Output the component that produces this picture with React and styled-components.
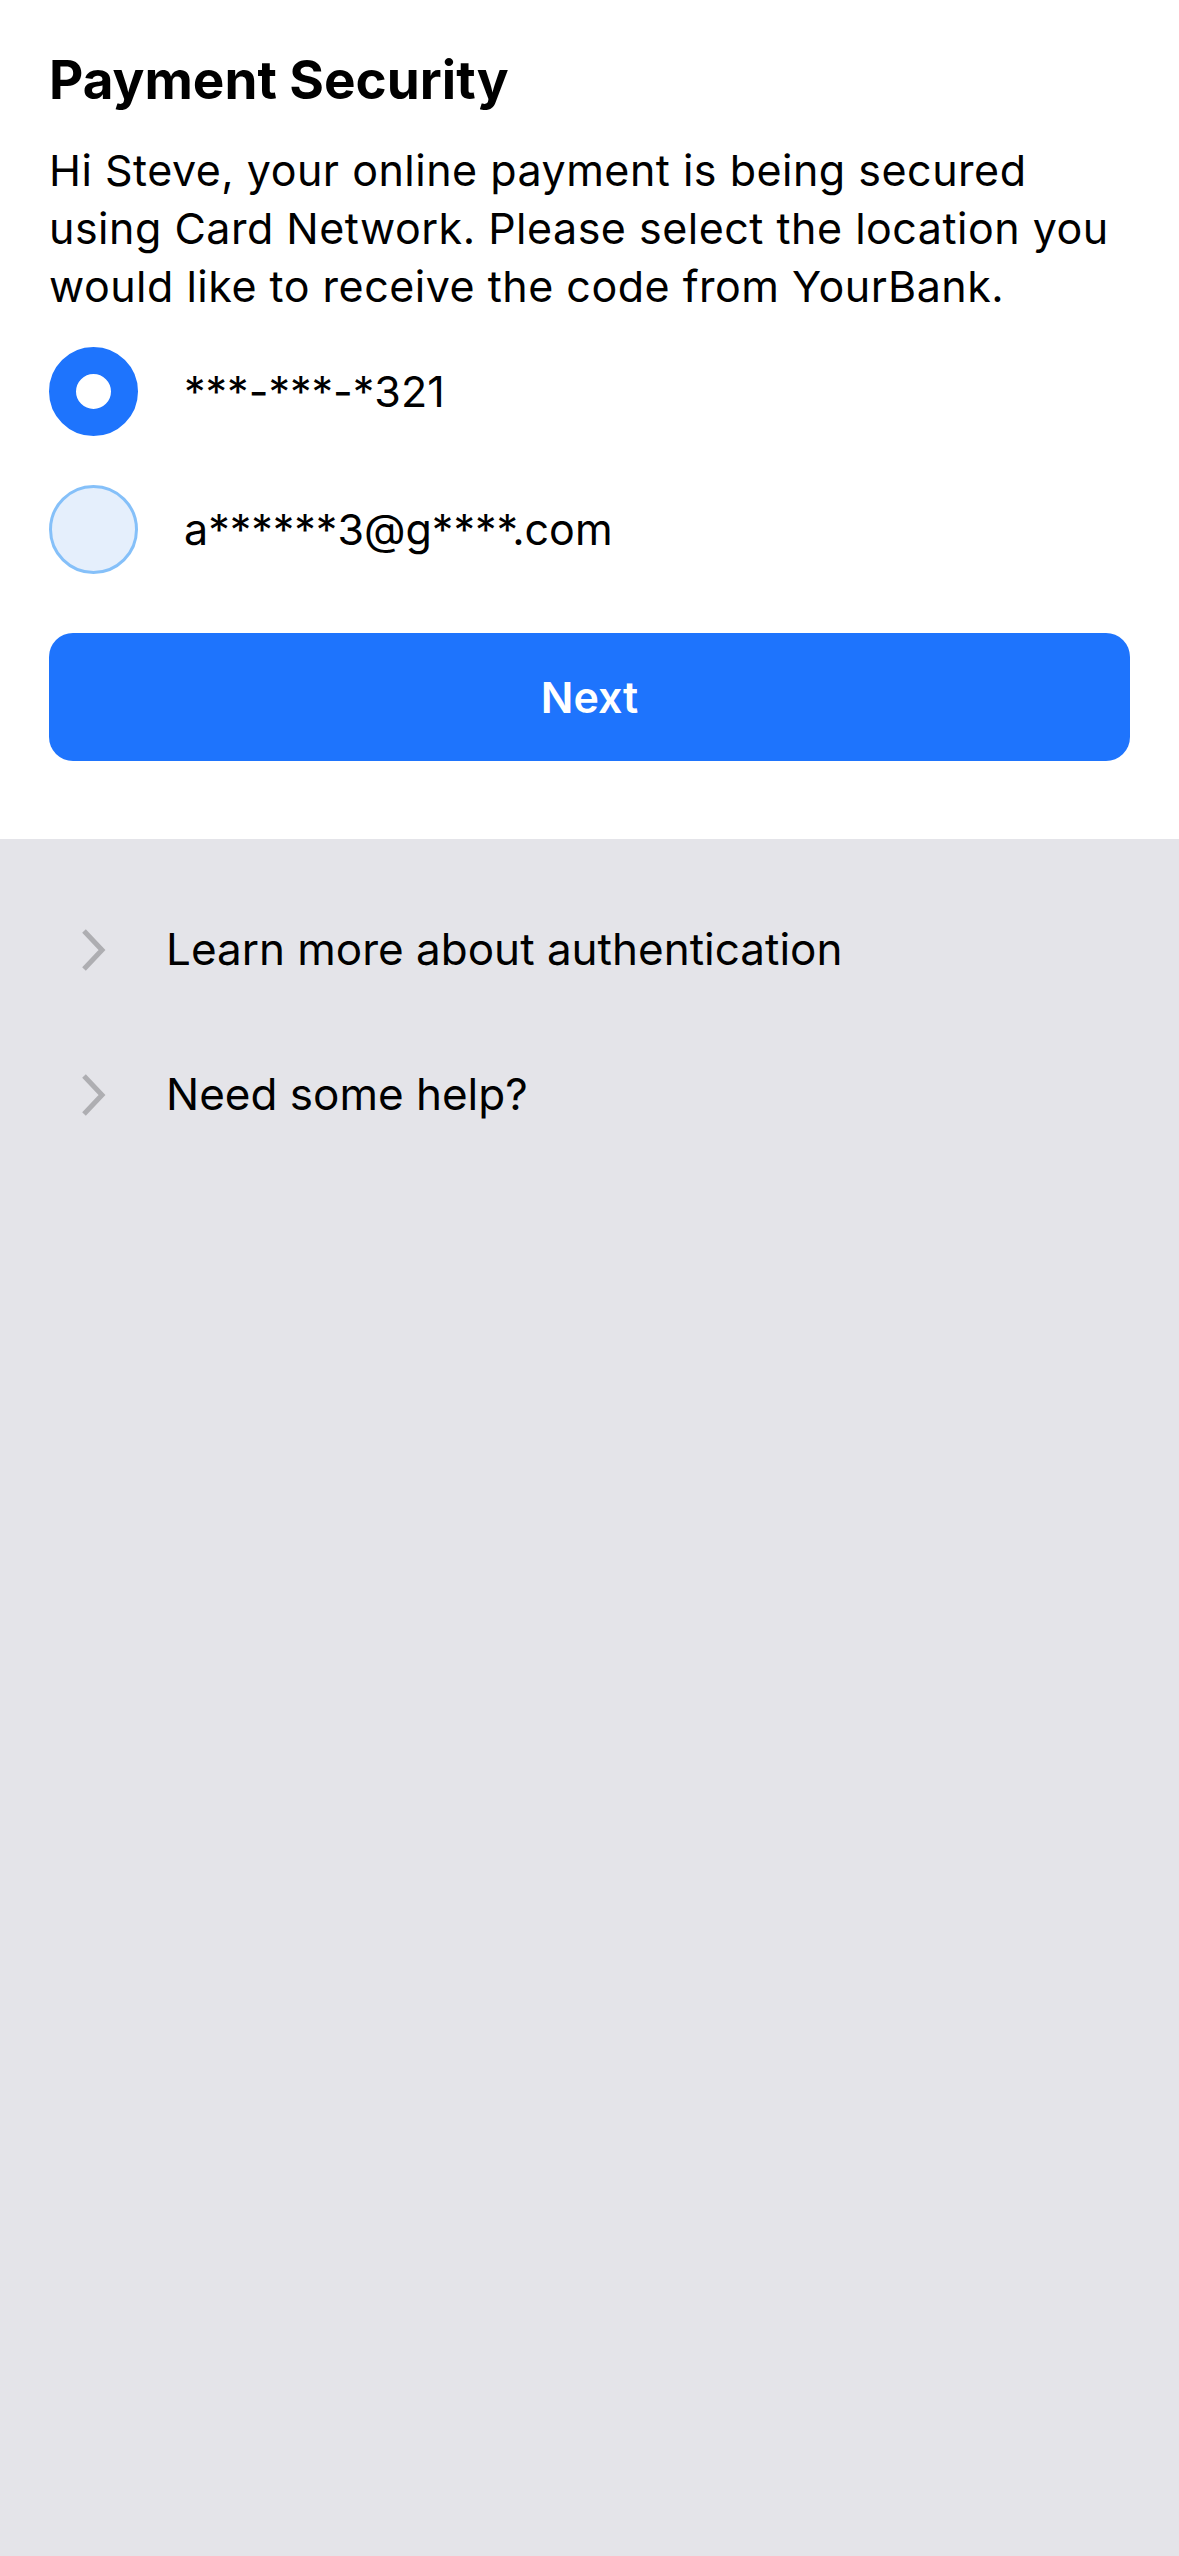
import React from 'react';
import styled, { createGlobalStyle } from 'styled-components';

const GlobalStyle = createGlobalStyle`
  html, body {
    margin: 0;
    padding: 0;
    background: #e4e4e9;
  }
  * {
    box-sizing: border-box;
  }
`;

const options = [
  { id: 'phone', label: '***-***-*321', selected: true },
  { id: 'email', label: 'a******3@g****.com', selected: false },
];

const links = ['Learn more about authentication', 'Need some help?'];

const Chevron = () => (
  <svg width="30" height="44" viewBox="0 0 30 44" fill="none">
    <polyline
      points="5,3 23,22 5,41"
      stroke="#aeaeb2"
      strokeWidth="5"
      strokeLinecap="butt"
      strokeLinejoin="miter"
    />
  </svg>
);

const App = () => (
  <Page>
    <GlobalStyle />
    <Card>
      <Title>Payment Security</Title>
      <Body>
        Hi Steve, your online payment is being secured
        <br />
        using Card Network. Please select the location you
        <br />
        would like to receive the code from YourBank.
      </Body>
      <OptionList>
        {options.map(o => (
          <Option key={o.id}>
            <Radio selected={o.selected} />
            <OptionLabel>{o.label}</OptionLabel>
          </Option>
        ))}
      </OptionList>
      <NextButton>Next</NextButton>
    </Card>
    <LinkList>
      {links.map(l => (
        <LinkRow key={l}>
          <IconSlot>
            <Chevron />
          </IconSlot>
          <LinkText>{l}</LinkText>
        </LinkRow>
      ))}
    </LinkList>
  </Page>
);

const Page = styled.div`
  min-height: 2556px;
  background: #e4e4e9;
  font-family: Inter, 'Noto Sans', sans-serif;
  color: #000;
`;

const Card = styled.div`
  background: #fff;
  padding: 50px 49px 78px;
`;

const Title = styled.h1`
  margin: 0 0 30px;
  font-size: 53px;
  line-height: 61px;
  font-weight: 700;
`;

const Body = styled.p`
  margin: 0;
  font-size: 43px;
  line-height: 58px;
  font-weight: 400;
  letter-spacing: 0.5px;
  white-space: nowrap;
`;

const OptionList = styled.div`
  margin-top: 7px;
  display: flex;
  flex-direction: column;
`;

const Option = styled.div`
  height: 138px;
  display: flex;
  align-items: center;
  gap: 46px;
`;

const Radio = styled.div`
  width: 89px;
  height: 89px;
  border-radius: 50%;
  flex-shrink: 0;
  background: ${p => (p.selected ? '#fff' : '#e5effc')};
  border: ${p => (p.selected ? '27px solid #1e74fd' : '3px solid #85c0f9')};
`;

const OptionLabel = styled.span`
  font-size: 43px;
  line-height: 55px;
`;

const NextButton = styled.button`
  display: block;
  width: 100%;
  height: 128px;
  margin-top: 35px;
  border: none;
  border-radius: 24px;
  background: #1e74fd;
  color: #fff;
  font-family: inherit;
  font-size: 43px;
  font-weight: 600;
`;

const LinkList = styled.div`
  padding: 38px 49px 0;
  display: flex;
  flex-direction: column;
`;

const LinkRow = styled.div`
  height: 145px;
  display: flex;
  align-items: center;
  gap: 28px;
`;

const IconSlot = styled.div`
  width: 89px;
  display: flex;
  justify-content: center;
  align-items: center;
`;

const LinkText = styled.span`
  font-size: 44px;
  line-height: 55px;
`;

export default App;
